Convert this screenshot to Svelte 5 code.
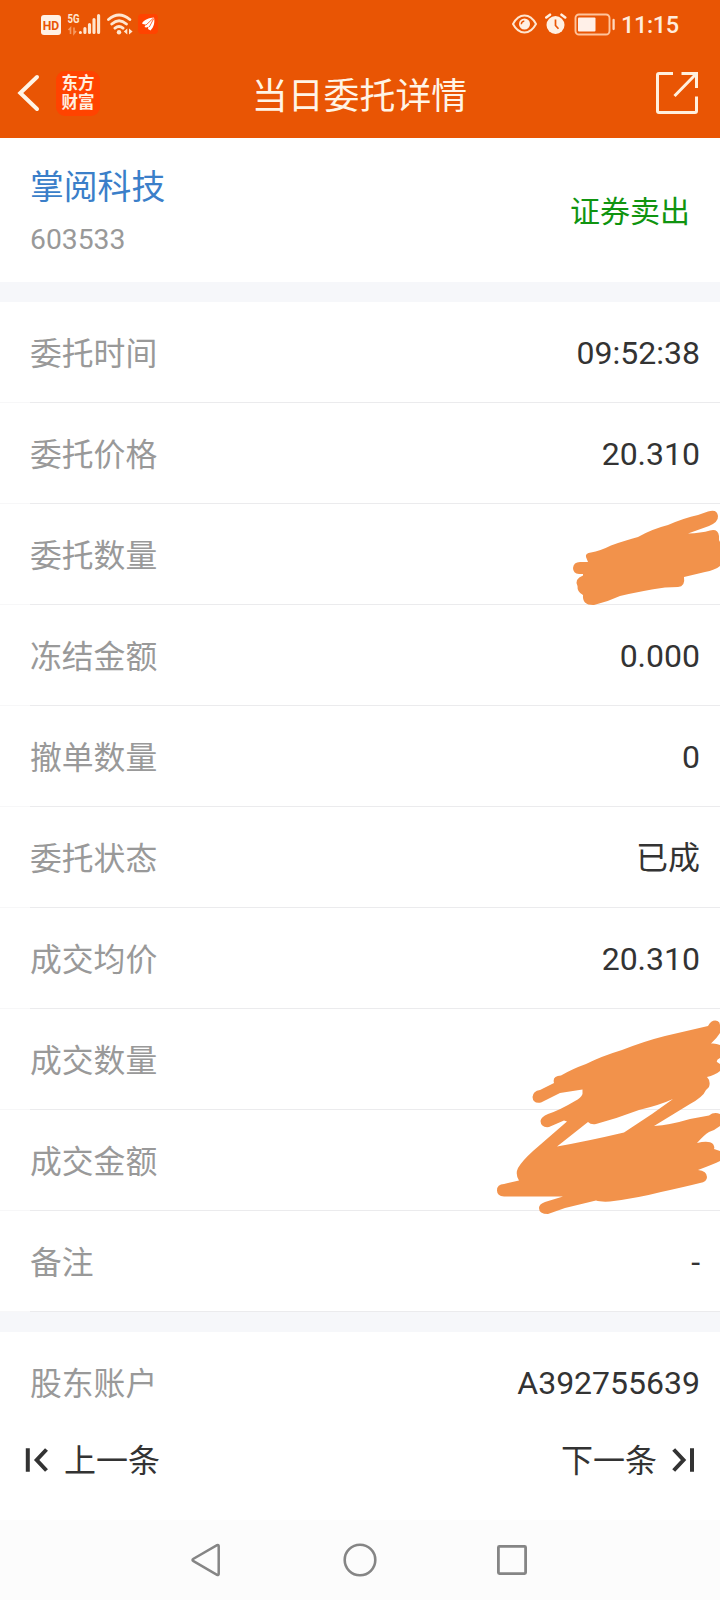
<script>
  const rows = [
    ['委托时间', '09:52:38'],
    ['委托价格', '20.310'],
    ['委托数量', ''],
    ['冻结金额', '0.000'],
    ['撤单数量', '0'],
    ['委托状态', '已成'],
    ['成交均价', '20.310'],
    ['成交数量', ''],
    ['成交金额', ''],
    ['备注', '-'],
  ];
</script>

<div class="screen">
  <header>
    <div class="status">
      <div class="left">
        <svg width="20" height="24" viewBox="41 12 20 24">
          <rect x="41" y="15" width="20" height="20" rx="3" fill="#fff1e4" />
          <text x="51" y="29.6" text-anchor="middle" font-size="13" font-weight="700" textLength="16.5" lengthAdjust="spacingAndGlyphs" fill="#e95504">HD</text>
        </svg>
        <svg class="signal" width="34" height="24" viewBox="67 12 34 24">
          <text x="67.5" y="23" font-size="12.5" font-weight="700" textLength="12" lengthAdjust="spacingAndGlyphs" fill="#ffe6d0">5G</text>
          <path d="M68.500 30l2-2v6M74 27.500v6l2-2.500" fill="none" stroke="#f59a62" stroke-width="1.6" />
          <path d="M80.400 32.500v0M84.900 28.500v4M89.500 24.500v8M94 19.500v13M98.600 15.500v17" stroke="#ffe6d0" stroke-width="3.100" stroke-linecap="round" />
        </svg>
        <svg class="wifi" width="26" height="24" viewBox="107 12 26 24">
          <path d="M108.500 19.500Q119 10.500 129.800 19.500M111.800 24Q119 17.600 126.400 24M115 28.200Q119 25 123 28.200" fill="none" stroke="#ffe6d0" stroke-width="2.900" stroke-linecap="round" />
          <circle cx="119" cy="32.300" r="2.200" fill="#ffe6d0" />
          <path d="M127.300 28.500v6l-3.500-3zM129 28.500v6l3.600-3z" fill="#ffe6d0" />
        </svg>
        <svg class="app" width="20" height="24" viewBox="138 12 20 24">
          <rect x="138" y="14" width="20" height="20" rx="4" fill="#ff4300" />
          <path d="M154 17.500C149 18 144 19.500 142 23.500q2 1.300 4 1L144.500 27q2 1 4-.5l-.5 2.500 2.500 1.500C154 27 155 22 154 17.500z" fill="#fff" />
          <path d="M153.500 18l-7.500 7M153.800 18.500l-4.500 8.500" stroke="#ff4300" stroke-width=".8" />
        </svg>
      </div>
      <div class="right">
        <svg width="25" height="24" viewBox="512 12 25 24">
          <path d="M513 24Q517.500 15.500 524.500 15.500T536 24Q531.500 32.500 524.500 32.500T513 24z" fill="none" stroke="#ffe6d0" stroke-width="2" />
          <circle cx="524.500" cy="24" r="5.500" fill="#fff0e3" />
          <path d="M521.300 24.200q.2-2.800 3-3.200" fill="none" stroke="#e95504" stroke-width="1.400" />
        </svg>
        <svg class="alarm" width="22" height="24" viewBox="545 12 22 24">
          <circle cx="555.500" cy="25" r="9" fill="#fff0e3" />
          <path d="M546.300 17.500l3.700-2.800M561.500 14.700l3.700 2.800" stroke="#fff0e3" stroke-width="2.600" stroke-linecap="round" />
          <path d="M555.500 19.500v6l3 3.300" fill="none" stroke="#e95504" stroke-width="1.700" />
        </svg>
        <svg class="battery" width="42" height="24" viewBox="574 12 42 24">
          <rect x="575.500" y="14.500" width="34" height="20" rx="3.500" fill="none" stroke="#ffc49c" stroke-width="1.900" />
          <rect x="578" y="17.500" width="17.500" height="14" rx="1" fill="#fff0e8" />
          <path d="M613.600 20v9" stroke="#ffd9be" stroke-width="2.300" stroke-linecap="round" />
        </svg>
        <span class="clock">11:15</span>
      </div>
    </div>
    <div class="titlebar">
      <div class="lead">
        <svg width="24" height="40" viewBox="17 73 24 40"><path d="M37 77L20.300 93 37 109" fill="none" stroke="#fff4e6" stroke-width="4" stroke-linecap="round" /></svg>
        <div class="logo">东方财富</div>
      </div>
      <h1>当日委托详情</h1>
      <svg class="share" width="44" height="44" viewBox="655 71 44 44">
        <path d="M673 73.500h-14q-1.500 0-1.500 1.500v36q0 1.500 1.500 1.500h36q1.500 0 1.500-1.500V96.500M681.500 73.500H696.500V88M696.500 73.500L674.500 96" fill="none" stroke="#fff0de" stroke-width="3" />
      </svg>
    </div>
  </header>

  <section class="stock">
    <div class="ident">
      <span class="name">掌阅科技</span>
      <span class="code">603533</span>
    </div>
    <span class="side">证券卖出</span>
  </section>

  <main>
    {#each rows as [label, value]}
      <div class="row"><span class="label">{label}</span><span class="value">{value}</span></div>
    {/each}
    <svg class="ink first" width="150" height="100" viewBox="570 508 150 100" fill="#f2924b">
      <path d="M586 557Q585 553 591 552.500Q600 551 611 545.500Q626 540 638 537Q652 529 668 525Q684 518 698 515L708 511.500Q717 508.500 718 516Q718.500 522 709 526L688 533.500Q701 533 710 530.500Q718 528.500 719 536Q718.500 540 720 542V566Q715 570 705 572L684 577Q685.500 586.500 678 587L665 587.500Q641 591 620 596Q607 602 594 605Q582 605.500 583 595Q577 592 577.500 586Q574 579 583 575.500V574H579Q573 573.500 573 568Q573.500 562 580 562H588z" />
    </svg>
    <svg class="ink second" width="225" height="196" viewBox="495 1019 225 196" fill="#f2924b" fill-rule="evenodd">
      <path d="M554 1083Q552 1076 561 1075.500Q572 1069 586 1064Q602 1056 622 1050Q645 1041 665 1036L708 1026Q712 1019 717.500 1021Q720 1022 720 1025V1033Q717 1038 711 1043.500Q716 1043 720 1045V1058Q716 1060 717 1062L720 1064V1071Q715 1075 707 1077Q711 1081 709 1087L706 1090Q703 1097 690 1104L654 1126Q670 1125 690 1119L709 1115.500Q714 1111.500 720 1114V1126Q715 1130 709 1132Q704 1135 697 1143Q709 1140 713 1144Q715 1147 714 1149Q717 1150 720 1151V1161Q714 1164 698 1170Q707 1171 707 1177Q707 1182 700 1183Q684 1187 661 1192Q638 1198 610 1201.500Q600 1202 596 1200.500L565 1208L548 1214Q539 1214 539 1208Q539 1204 545 1202L563 1196.500H504Q497 1196 497 1190.500Q497 1184 504 1184L519 1180.500Q515 1174 518 1168Q522 1161 533 1151L567 1121.500L564 1120.500L549 1127Q541 1128 540.500 1121Q541 1117 548 1114Q560 1110 575 1101Q581 1098 582.500 1094V1089.500L560 1093L541 1102.500Q533 1104 532.500 1097Q533 1091 540 1090zM557 1146.500Q588 1141 624 1132.500L652 1114L673 1099Q660 1105 639 1110Q618 1118 596 1124Q591 1125 588 1122z" />
    </svg>
  </main>

  <section class="account">
    <span class="label">股东账户</span><span class="value">A392755639</span>
  </section>
  <section class="pager">
    <div class="step">
      <svg width="24" height="26" viewBox="25 1447 24 26"><path d="M27.800 1448.300v23.400M46.500 1449.500L36.700 1460l9.800 10.500" fill="none" stroke="#333" stroke-width="4" /></svg>
      <span>上一条</span>
    </div>
    <div class="step">
      <span>下一条</span>
      <svg width="24" height="26" viewBox="672 1447 24 26"><path d="M692 1448.300v23.400M673.700 1449.500L683.500 1460l-9.800 10.500" fill="none" stroke="#333" stroke-width="4" /></svg>
    </div>
  </section>

  <nav>
    <svg width="32" height="36" viewBox="191 1542 32 36"><path d="M217 1545.200Q218.700 1544.500 218.700 1546v28q0 1.500-1.700.8l-23.500-13.600q-2-1.200 0-2.400z" fill="none" stroke="#858585" stroke-width="2.500" /></svg>
    <svg width="36" height="36" viewBox="342 1542 36 36"><circle cx="360" cy="1560" r="15.300" fill="none" stroke="#858585" stroke-width="2.600" /></svg>
    <svg width="32" height="36" viewBox="497 1542 32 36"><rect x="498.400" y="1546.400" width="27.200" height="27.200" rx="1" fill="none" stroke="#858585" stroke-width="2.800" /></svg>
  </nav>
</div>

<style>
  :global(body) { margin: 0; background: #fff; }
  .screen {
    width: 720px;
    height: 1600px;
    overflow: hidden;
    display: flex;
    flex-direction: column;
    background: #fff;
    color: #333;
    font-family: Roboto, "Noto Sans CJK SC", sans-serif;
  }
  svg { display: block; flex: none; }
  header { height: 138px; flex: none; background: #e95504; }
  .status {
    height: 48px;
    box-sizing: border-box;
    padding: 0 40px 0 41px;
    display: flex;
    align-items: center;
    justify-content: space-between;
  }
  .left, .right { display: flex; align-items: center; }
  .signal, .wifi { margin-left: 6px; }
  .app { margin-left: 5px; }
  .alarm { margin-left: 8px; }
  .battery { margin-left: 7px; }
  .clock {
    margin-left: 5px;
    width: 59px;
    font-size: 23.500px;
    line-height: 24px;
    letter-spacing: -0.400px;
    font-weight: 500;
    color: #ffecdc;
    white-space: nowrap;
    padding-top: 2px;
  }
  .titlebar {
    height: 90px;
    display: grid;
    grid-template-columns: 1fr auto 1fr;
    align-items: center;
    padding: 0 21px 0 17px;
    box-sizing: border-box;
  }
  .lead { display: flex; align-items: center; gap: 15px; }
  .logo {
    width: 44px;
    height: 45px;
    box-sizing: border-box;
    padding: 2px 5px 0;
    border-radius: 9px;
    background: #ff4300;
    color: #fff0e0;
    text-align: center;
    word-break: break-all;
    font: 700 16.500px/19.500px "Noto Sans CJK SC", sans-serif;
  }
  h1 {
    margin: 7px 0 0 3px;
    font-size: 35.900px;
    line-height: 48px;
    font-weight: 400;
    color: #fff4e6;
  }
  .share { justify-self: end; }
  .stock {
    height: 144px;
    flex: none;
    box-sizing: border-box;
    padding: 3px 30px 0;
    display: flex;
    align-items: center;
    justify-content: space-between;
  }
  .ident { display: flex; flex-direction: column; gap: 11px; }
  .name { font-size: 33.800px; line-height: 46px; color: #3b7fc9; }
  .code { font-size: 28.300px; line-height: 36px; color: #999; }
  .side { font-size: 30px; line-height: 40px; color: #109410; }
  main { position: relative; border-top: 20px solid #f6f7fa; }
  .row {
    height: 101px;
    box-sizing: border-box;
    padding: 0 20px 0 30px;
    display: flex;
    align-items: center;
    justify-content: space-between;
    background: linear-gradient(90deg, #f7f7f8 30px, #ebebed 30px) 0 100% / 720px 1px no-repeat;
  }
  .label { font-size: 31.800px; line-height: 44px; color: #999; padding-top: 2px; }
  .value { font-size: 32px; line-height: 44px; color: #333; }
  .ink { position: absolute; right: 0; }
  .first { top: 206px; }
  .second { top: 717px; }
  .account {
    flex: none;
    box-sizing: border-box;
    border-top: 20px solid #f6f7fa;
    height: 122px;
    padding: 0 20px 0 30px;
    display: flex;
    align-items: center;
    justify-content: space-between;
  }
  .pager {
    flex: 1;
    display: flex;
    align-items: flex-start;
    justify-content: space-between;
    padding: 2px 24px 0 25px;
  }
  .step {
    display: flex;
    align-items: center;
    gap: 15px;
    font-size: 32px;
    line-height: 46px;
  }
  .step span { padding-top: 2px; }
  nav {
    height: 80px;
    flex: none;
    box-sizing: border-box;
    padding: 0 191px;
    background: #fcfcfc;
    display: flex;
    align-items: center;
    justify-content: space-between;
  }
</style>
